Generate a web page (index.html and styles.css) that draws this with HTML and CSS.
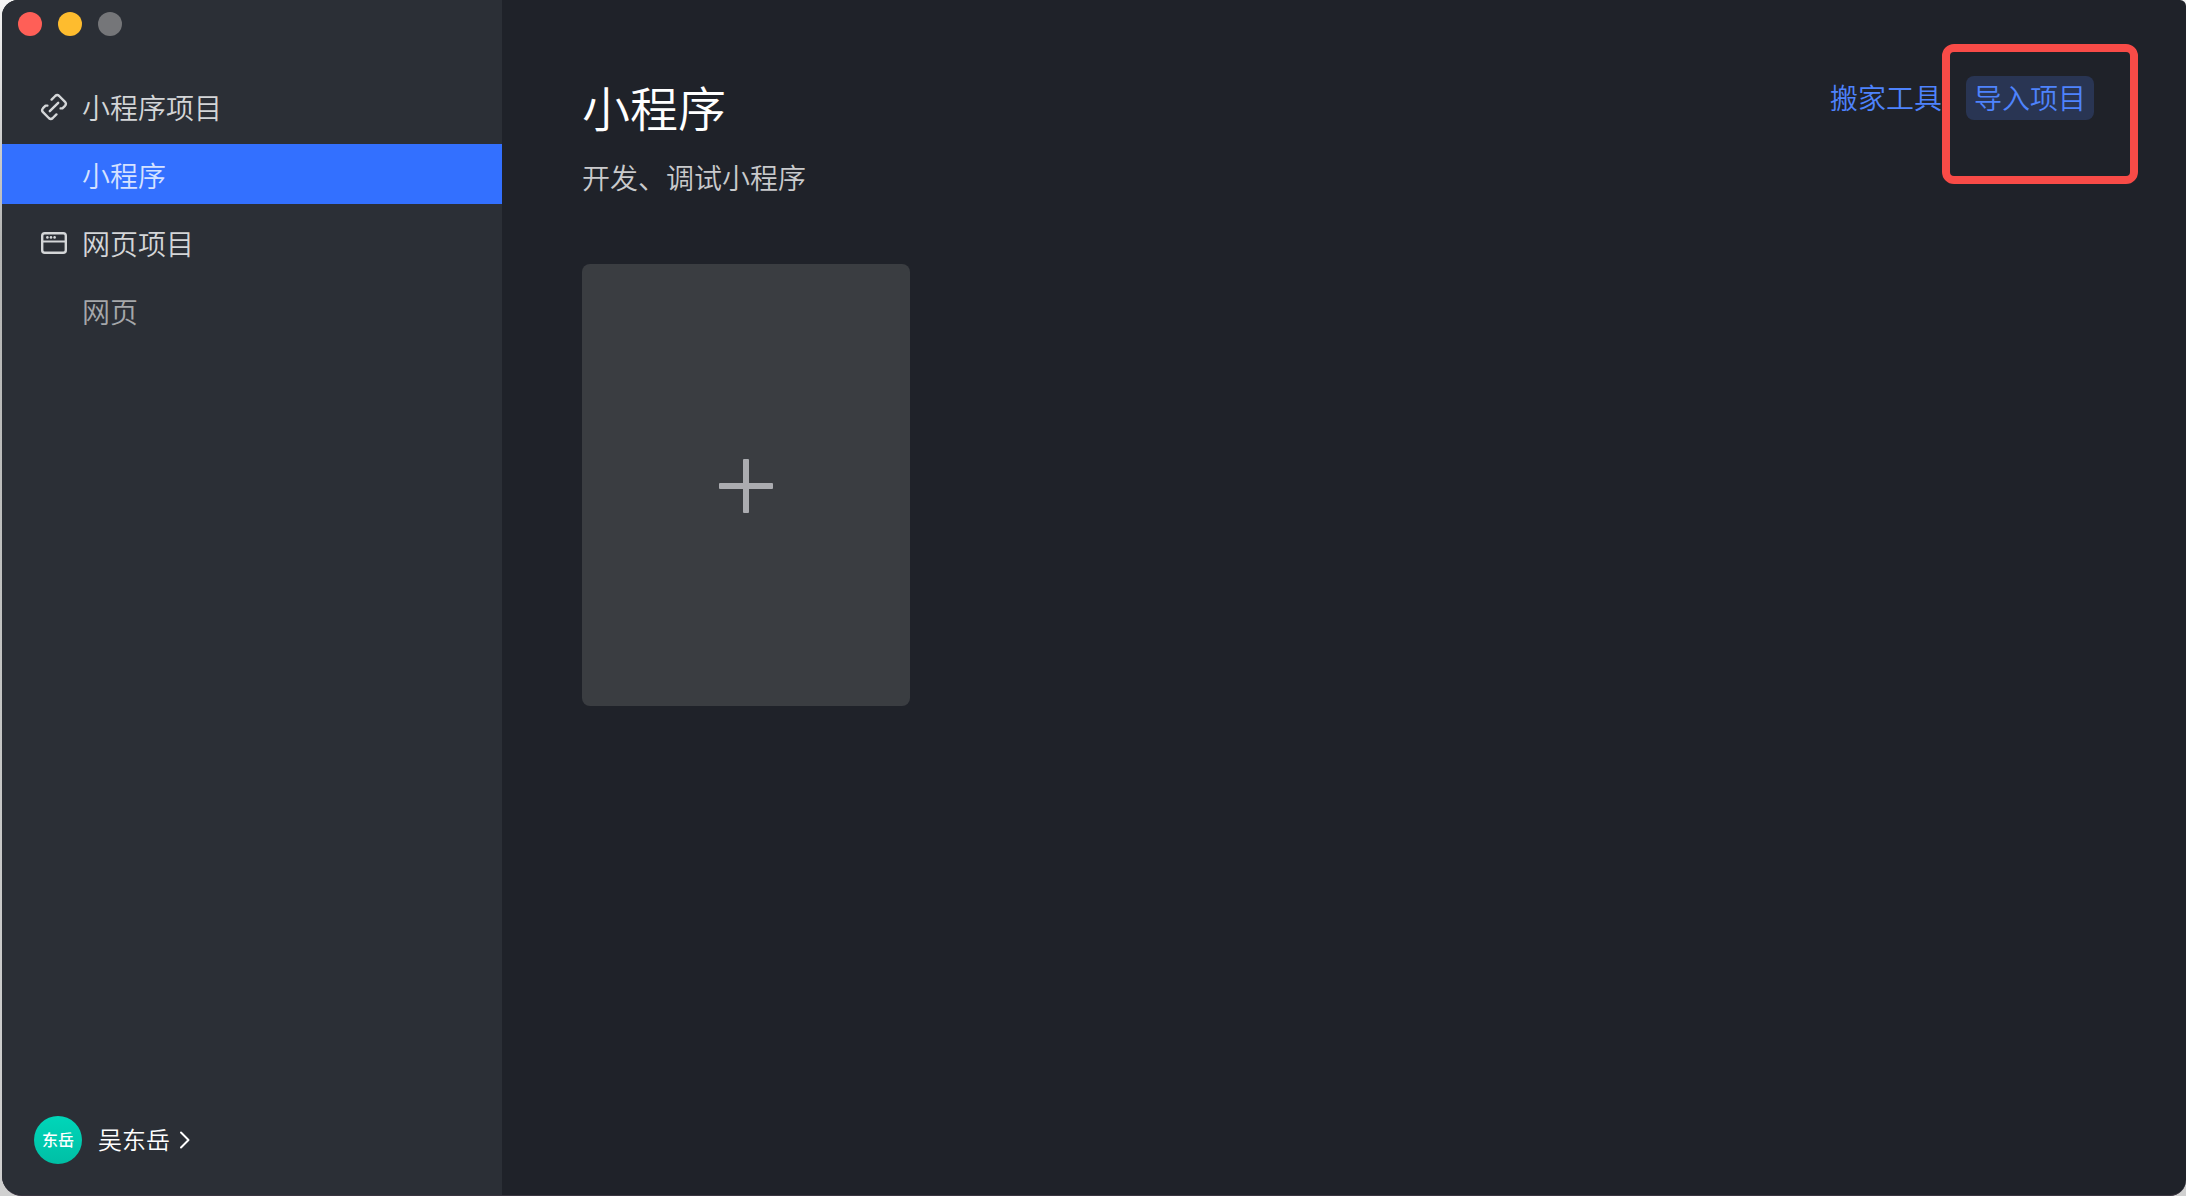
FILE: index.html
```html
<!DOCTYPE html>
<html lang="zh-CN">
<head>
<meta charset="utf-8">
<title>小程序</title>
<link rel="stylesheet" href="styles.css">
</head>
<body>
<div class="window">
  <aside class="sidebar">
    <div class="controls">
      <button class="light close" aria-label="关闭"></button>
      <button class="light minimize" aria-label="最小化"></button>
      <button class="light zoom" aria-label="缩放" disabled></button>
    </div>
    <nav class="menu">
      <div class="row group">
        <svg class="icon" viewBox="0 0 28 28" aria-hidden="true">
          <g fill="none" stroke="currentColor" stroke-width="2.4" stroke-linecap="round" stroke-linejoin="round">
            <path d="M11.6 6.6 15.2 3Q17.2 1.2 19.2 3L25 8.8Q26.8 10.8 25 12.8L22.4 15.4H20.6"/>
            <path d="M16.4 21.4 12.8 25Q10.8 26.8 8.8 25L3 19.2Q1.2 17.2 3 15.2L5.6 12.6H7.4"/>
            <path d="M9.8 18.2 18.2 9.8"/>
          </g>
        </svg>
        <span>小程序项目</span>
      </div>
      <a class="row item active" href="#mini">小程序</a>
      <div class="row group">
        <svg class="icon" viewBox="0 0 28 28" aria-hidden="true">
          <rect x="2.2" y="4.2" width="23.6" height="19.6" rx="2.6" fill="none" stroke="currentColor" stroke-width="2.4"/>
          <path d="M2.5 12.6H25.5" stroke="currentColor" stroke-width="2"/>
          <g fill="currentColor">
            <circle cx="7.4" cy="8.4" r="1.3"/>
            <circle cx="11" cy="8.4" r="1.3"/>
            <circle cx="14.6" cy="8.4" r="1.3"/>
          </g>
        </svg>
        <span>网页项目</span>
      </div>
      <a class="row item" href="#web">网页</a>
    </nav>
    <button class="account">
      <span class="avatar">东岳</span>
      <span class="name">吴东岳</span>
      <svg class="chevron" viewBox="0 0 12 20" aria-hidden="true">
        <path d="M2 2.5 9.5 10 2 17.5" fill="none" stroke="currentColor" stroke-width="2" stroke-linecap="round" stroke-linejoin="round"/>
      </svg>
    </button>
  </aside>
  <main class="content">
    <header class="header">
      <div>
        <h1 class="title">小程序</h1>
        <p class="subtitle">开发、调试小程序</p>
      </div>
      <div class="actions">
        <button class="action">搬家工具</button>
        <div class="marked">
          <button class="action hover">导入项目</button>
          <span class="marker"></span>
        </div>
      </div>
    </header>
    <button class="card" aria-label="新建项目">
      <svg class="plus" viewBox="0 0 54 54" aria-hidden="true">
        <g fill="currentColor">
          <rect x="24" y="0" width="6" height="54" rx="1"/>
          <rect x="0" y="24" width="54" height="6" rx="1"/>
        </g>
      </svg>
    </button>
  </main>
</div>
</body>
</html>
```
FILE: styles.css
```css
* {
  box-sizing: border-box;
}

body {
  margin: 0;
  padding-left: 2px;
  background: linear-gradient(#f4f4f4, #b4b5b4 20%, #c4c5c4 60%, #d0d0d0);
  font-family: "Noto Sans CJK SC", sans-serif;
  font-weight: 350;
}

button {
  padding: 0;
  border: 0;
  background: none;
  color: inherit;
  font: inherit;
}

a {
  color: inherit;
  text-decoration: none;
}

.window {
  display: flex;
  min-height: 100vh;
  overflow: hidden;
  border-bottom: 1px solid #3a3540;
  border-radius: 16px 6px 16px 20px;
  background: #1f2229;
}

.sidebar {
  display: flex;
  flex: 0 0 500px;
  flex-direction: column;
  background: #2b2f36;
}

.controls {
  display: flex;
  gap: 16px;
  padding: 12px 16px;
}

.light {
  width: 24px;
  height: 24px;
  border-radius: 50%;
}

.close {
  background: #ff5f57;
}

.minimize {
  background: #febc2e;
}

.zoom {
  background: #757679;
}

.menu {
  display: flex;
  flex-direction: column;
  gap: 8px;
  margin-top: 28px;
}

.row {
  display: flex;
  align-items: center;
  height: 60px;
  padding-top: 2px;
  font-size: 28px;
  line-height: 40px;
}

.group {
  gap: 14px;
  padding-left: 38px;
  color: #d4d6d8;
}

.icon {
  width: 28px;
  height: 28px;
}

.item {
  padding-left: 80px;
  color: #a5a7aa;
}

.active {
  background: #3370ff;
  color: #d6e2ff;
}

.account {
  display: flex;
  align-items: center;
  gap: 16px;
  margin: auto 32px 31px;
  color: #fff;
  font-size: 24px;
  line-height: 36px;
}

.avatar {
  width: 48px;
  height: 48px;
  border-radius: 50%;
  background: linear-gradient(#00d6b9, #00bfa5);
  font-size: 16px;
  font-weight: 500;
  line-height: 46px;
}

.name {
  padding-bottom: 2px;
}

.chevron {
  width: 12px;
  height: 20px;
  margin-left: -7px;
}

.content {
  flex: 1;
  padding: 76px 92px 76px 80px;
}

.header {
  display: flex;
  align-items: flex-start;
  justify-content: space-between;
}

.title {
  margin: 0;
  color: #fff;
  font-size: 48px;
  font-weight: 350;
  line-height: 60px;
}

.subtitle {
  margin: 20px 0 0;
  color: #c9cacc;
  font-size: 28px;
  line-height: 42px;
}

.actions {
  display: flex;
  gap: 16px;
}

.action {
  height: 44px;
  padding: 0 8px 2px;
  border-radius: 8px;
  color: #4e83fd;
  font-size: 28px;
  line-height: 42px;
}

.hover {
  background: #293553;
}

.marked {
  position: relative;
}

.marker {
  position: absolute;
  inset: -32px -44px -64px -24px;
  border: 8px solid #f84b47;
  border-radius: 12px;
  pointer-events: none;
}

.card {
  display: flex;
  align-items: center;
  justify-content: center;
  width: 328px;
  height: 442px;
  margin-top: 66px;
  padding-top: 2px;
  border-radius: 8px;
  background: #3a3d41;
  color: #abacb0;
}

.plus {
  width: 54px;
  height: 54px;
}
```
